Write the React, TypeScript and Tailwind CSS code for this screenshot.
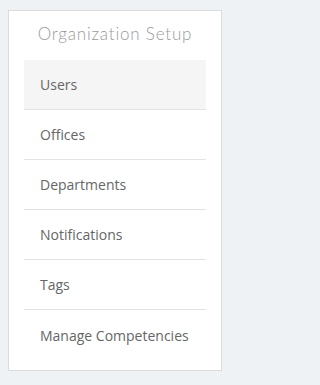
import React from "react";

const items = ["Users", "Offices", "Departments", "Notifications", "Tags", "Manage Competencies"];

export default function App() {
  return (
    <div className="min-h-screen w-full bg-[#eef2f5] pt-[10px] pl-[8px]">
      <div className="w-[214px] border border-[#dcdcdc] bg-white px-[15px] pb-[10px]">
        <div
          className="flex h-[49px] items-center justify-center pb-[3px] text-[17px] font-light tracking-[0.8px] text-[#9a9a9a]"
          style={{ fontFamily: "Lato, 'Open Sans', sans-serif" }}
        >
          Organization Setup
        </div>
        <ul className="flex flex-col" style={{ fontFamily: "'Open Sans', sans-serif" }}>
          {items.map((it, i) => (
            <li
              key={it}
              className={`flex h-[50px] items-center pl-[16px] text-[14px] text-[#666666] ${
                i < items.length - 1 ? "border-b border-[#e3e3e3]" : ""
              } ${i === 0 ? "bg-[#f5f5f5]" : ""}`}
            >
              {it}
            </li>
          ))}
        </ul>
      </div>
    </div>
  );
}
